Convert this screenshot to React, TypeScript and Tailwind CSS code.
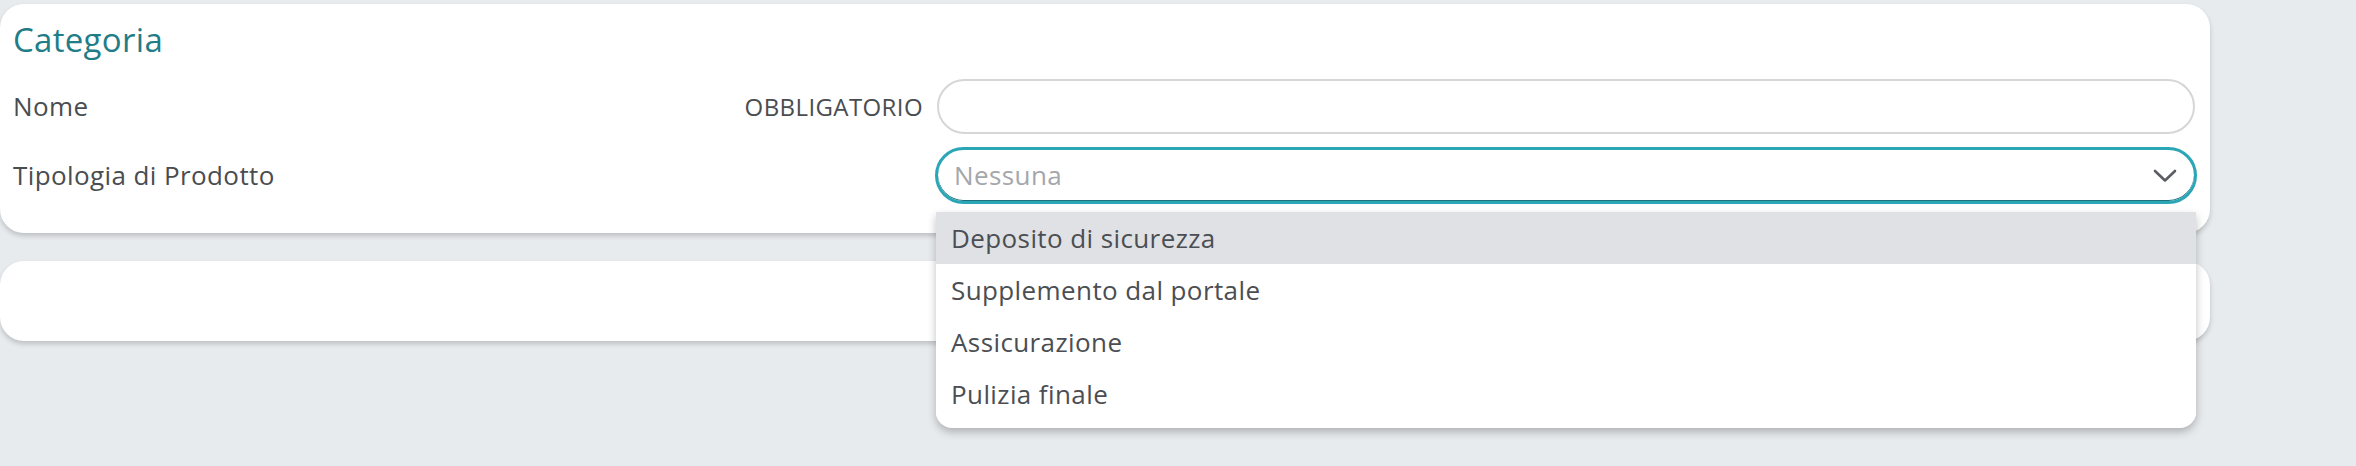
const font = "font-['Open_Sans',sans-serif]"

const options = ["Deposito di sicurezza", "Supplemento dal portale", "Assicurazione", "Pulizia finale"]

export default function App() {
    return (
        <div className={`w-[2356px] h-[466px] overflow-hidden bg-[#e8ebee] pt-[4px] ${font}`}>
            <div className="w-[2210px] flex flex-col gap-[28px]">

                {/* card categoria */}
                <div className="relative bg-white rounded-[24px] shadow-[0_3px_5px_rgba(0,0,0,0.18)] pt-[16px] pb-[29px] pl-[13px] pr-[15px]">
                    <h1 className="text-[33px] leading-[40px] tracking-[0.3px] text-[#1f7d88]">Categoria</h1>

                    <div className="mt-[18px] flex items-center h-[57px]">
                        <span className="flex-1 text-[26px] tracking-[0.4px] text-[#4a4d50]">Nome</span>
                        <span className="mr-[14px] text-[24px] tracking-[0.4px] text-[#4a4d50]">OBBLIGATORIO</span>
                        <div className="w-[1258px] h-[55px] rounded-full border-2 border-[#d4d6d8] bg-white"></div>
                    </div>

                    <div className="mt-[12px] flex items-center h-[57px]">
                        <span className="flex-1 text-[26px] tracking-[0.4px] text-[#4a4d50]">Tipologia di Prodotto</span>
                        <div className="w-[1262px] -mr-[2px] h-[57px] rounded-full border-[3px] border-[#2ba6b6] shadow-[inset_0_-1px_0_#1d6f79] bg-white flex items-center pl-[16px] pr-[17px]">
                            <span className="flex-1 text-[26px] tracking-[0.4px] text-[#a4a7ab]">Nessuna</span>
                            <svg width="24" height="14" viewBox="0 0 24 14" fill="none">
                                <path d="M2 2 L12 11.5 L22 2" stroke="#5a5d61" strokeWidth="2.6" strokeLinecap="round" strokeLinejoin="round"/>
                            </svg>
                        </div>
                    </div>

                    {/* dropdown open */}
                    <div className="absolute z-10 top-[208px] left-[936px] w-[1260px] bg-white rounded-b-[16px] shadow-[0_4px_8px_rgba(0,0,0,0.25)] pb-[8px] overflow-hidden">
                        {options.map((o, i) => (
                            <div key={o} className={`h-[52px] flex items-center pl-[15px] text-[26px] tracking-[0.4px] text-[#4b4e52] ${i === 0 ? "bg-[#dfe1e5]" : "bg-white"}`}>
                                {o}
                            </div>
                        ))}
                    </div>
                </div>

                {/* card vuota */}
                <div className="h-[80px] bg-white rounded-[24px] shadow-[0_3px_5px_rgba(0,0,0,0.18)]"></div>
            </div>
        </div>
    )
}
